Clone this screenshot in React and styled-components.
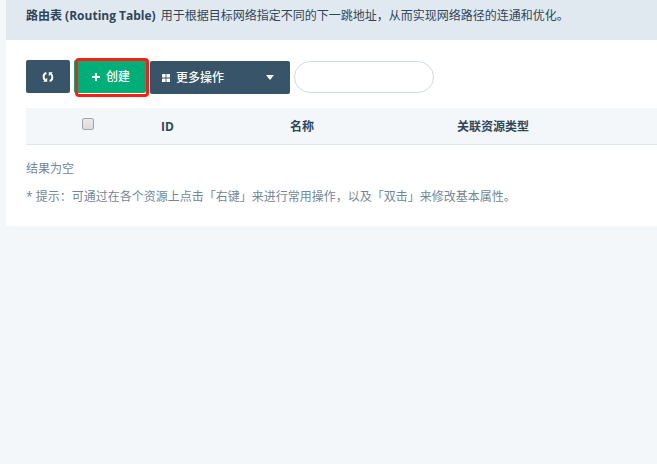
import React from "react";
import styled, { createGlobalStyle } from "styled-components";

const GlobalStyle = createGlobalStyle`
  * { box-sizing: border-box; }
  body {
    margin: 0;
    background: #f3f7fa;
    color: #2f4659;
    font: 12px/20px "Open Sans", "Noto Sans CJK SC", sans-serif;
  }
  button, input { font: inherit; }
`;

const Page = styled.main`
  margin-left: 6px;
  background: #fff;
`;

const Intro = styled.p`
  margin: 0;
  padding: 6px 20px 14px;
  background: #e1e9f0;
`;

const Term = styled.strong`
  margin-right: 2px;
`;

const Content = styled.section`
  padding: 20px 0 19px 20px;
`;

const Toolbar = styled.div`
  display: flex;
  align-items: flex-start;
  gap: 4px;
  margin-bottom: 14px;
`;

const Button = styled.button`
  position: relative;
  display: flex;
  align-items: center;
  justify-content: ${(p) => p.$justify || "center"};
  gap: 6px;
  width: ${(p) => p.$width};
  height: 33px;
  margin: 0;
  padding: 0 12px;
  border: 0;
  border-radius: 2px;
  background: ${(p) => (p.$primary ? "#00ae78" : "#375468")};
  color: #fff;
  font-weight: 500;
  white-space: nowrap;
  cursor: pointer;
`;

const CreateButton = styled(Button)`
  padding: 0 10px 0 12px;

  &::after {
    content: "";
    position: absolute;
    inset: -2px -3px -4px 1px;
    border: 3px solid #ff1c12;
    border-radius: 4px;
  }
`;

const MenuButton = styled(Button)`
  margin-top: 1px;
`;

const Caret = styled.svg`
  margin: 0 4px 0 auto;
`;

const Search = styled.input`
  width: 140px;
  height: 32px;
  margin: 1px 0 0;
  padding: 0 14px;
  border: 1px solid #cfdbe5;
  border-radius: 16px;
  background: #fff;
  color: inherit;
  outline: none;
`;

const Table = styled.table`
  width: 100%;
  table-layout: fixed;
  border-collapse: separate;
  border-spacing: 0;
`;

const HeadCell = styled.th`
  width: ${(p) => p.$width || "auto"};
  height: 37px;
  padding: 1px 10px 0;
  border-bottom: 1px solid #dce6ee;
  background: #f3f7fa;
  text-align: left;
  font-weight: 700;
`;

const SelectCell = styled(HeadCell)`
  padding: 0 12px 4px 10px;
`;

const Checkbox = styled.input`
  appearance: none;
  display: block;
  width: 12px;
  height: 12px;
  margin: 0 auto;
  border: 1px solid #a3a6a8;
  border-radius: 2px;
  background: linear-gradient(#e9e9e9, #dcdcdc);

  &:checked {
    background: #375468;
  }
`;

const EmptyCell = styled.td`
  padding: 14px 0 0;
  color: #738797;
`;

const Hint = styled.p`
  margin: 8px 0 0;
  color: #738797;
`;

export default function App() {
  return (
    <>
      <GlobalStyle />
      <Page>
        <Intro>
          <Term>路由表 (Routing Table)</Term> 用于根据目标网络指定不同的下一跳地址，从而实现网络路径的连通和优化。
        </Intro>
        <Content>
          <Toolbar>
            <Button type="button" $width="44px" aria-label="刷新">
              <svg width="12" height="12" viewBox="0 0 12 12" fill="none" stroke="#fff" strokeWidth="2" aria-hidden="true">
                <path d="M4.4 2C1 3 .8 7 3.2 9.4M7.6 10C11 9 11.2 5 8.8 2.6" />
                <path d="M1.2 10.8h4V6.8zM10.8 1.2h-4v4z" fill="#fff" stroke="none" />
              </svg>
            </Button>
            <CreateButton type="button" $width="72px" $primary>
              <svg width="8" height="8" viewBox="0 0 8 8" stroke="#fff" strokeWidth="2" aria-hidden="true">
                <path d="M4 0v8M0 4h8" />
              </svg>
              创建
            </CreateButton>
            <MenuButton type="button" $width="140px" $justify="flex-start" aria-haspopup="menu">
              <svg width="8" height="8" viewBox="0 0 8 8" fill="#fff" aria-hidden="true">
                <rect width="3.6" height="3.6" rx=".5" />
                <rect x="4.4" width="3.6" height="3.6" rx=".5" />
                <rect y="4.4" width="3.6" height="3.6" rx=".5" />
                <rect x="4.4" y="4.4" width="3.6" height="3.6" rx=".5" />
              </svg>
              更多操作
              <Caret width="8" height="5" viewBox="0 0 8 5" fill="#fff" aria-hidden="true">
                <path d="M0 0h8L4 5z" />
              </Caret>
            </MenuButton>
            <Search type="search" aria-label="搜索" />
          </Toolbar>
          <Table>
            <thead>
              <tr>
                <SelectCell scope="col" $width="125px">
                  <Checkbox type="checkbox" aria-label="全选" />
                </SelectCell>
                <HeadCell scope="col" $width="129px">ID</HeadCell>
                <HeadCell scope="col" $width="167px">名称</HeadCell>
                <HeadCell scope="col">关联资源类型</HeadCell>
              </tr>
            </thead>
            <tbody>
              <tr>
                <EmptyCell colSpan={4}>结果为空</EmptyCell>
              </tr>
            </tbody>
          </Table>
          <Hint>* 提示：可通过在各个资源上点击「右键」来进行常用操作，以及「双击」来修改基本属性。</Hint>
        </Content>
      </Page>
    </>
  );
}
